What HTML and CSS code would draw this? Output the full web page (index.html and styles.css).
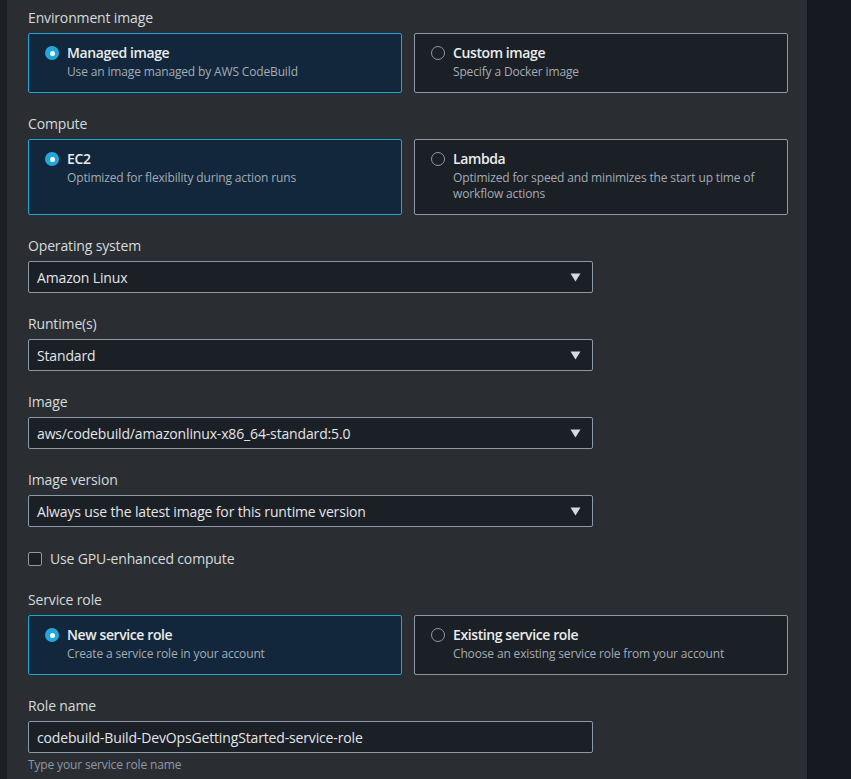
FILE: index.html
```html
<!DOCTYPE html>
<html lang="en">
<head>
<meta charset="utf-8">
<title>Environment</title>
<link rel="stylesheet" href="styles.css">
</head>
<body>
<div class="page">
  <div class="strip"></div>
  <main class="panel">
    <div class="field">
      <div class="label">Environment image</div>
      <div class="tiles">
        <div class="tile selected">
          <span class="radio on"></span>
          <div class="tile-text">
            <div class="tile-title">Managed image</div>
            <div class="tile-desc">Use an image managed by AWS CodeBuild</div>
          </div>
        </div>
        <div class="tile">
          <span class="radio"></span>
          <div class="tile-text">
            <div class="tile-title">Custom image</div>
            <div class="tile-desc">Specify a Docker image</div>
          </div>
        </div>
      </div>
    </div>

    <div class="field">
      <div class="label">Compute</div>
      <div class="tiles">
        <div class="tile selected">
          <span class="radio on"></span>
          <div class="tile-text">
            <div class="tile-title">EC2</div>
            <div class="tile-desc">Optimized for flexibility during action runs</div>
          </div>
        </div>
        <div class="tile">
          <span class="radio"></span>
          <div class="tile-text">
            <div class="tile-title">Lambda</div>
            <div class="tile-desc">Optimized for speed and minimizes the start up time of workflow actions</div>
          </div>
        </div>
      </div>
    </div>

    <div class="field">
      <div class="label">Operating system</div>
      <div class="select"><span>Amazon Linux</span><svg class="caret" width="11" height="9" viewBox="0 0 11 9"><path d="M0.5 0.5 L10.5 0.5 L5.5 8.5 Z" fill="#d5dbdb"/></svg></div>
    </div>

    <div class="field">
      <div class="label">Runtime(s)</div>
      <div class="select"><span>Standard</span><svg class="caret" width="11" height="9" viewBox="0 0 11 9"><path d="M0.5 0.5 L10.5 0.5 L5.5 8.5 Z" fill="#d5dbdb"/></svg></div>
    </div>

    <div class="field">
      <div class="label">Image</div>
      <div class="select"><span>aws/codebuild/amazonlinux-x86_64-standard:5.0</span><svg class="caret" width="11" height="9" viewBox="0 0 11 9"><path d="M0.5 0.5 L10.5 0.5 L5.5 8.5 Z" fill="#d5dbdb"/></svg></div>
    </div>

    <div class="field">
      <div class="label">Image version</div>
      <div class="select"><span>Always use the latest image for this runtime version</span><svg class="caret" width="11" height="9" viewBox="0 0 11 9"><path d="M0.5 0.5 L10.5 0.5 L5.5 8.5 Z" fill="#d5dbdb"/></svg></div>
    </div>

    <label class="check-row">
      <span class="checkbox"></span>
      <span class="check-label">Use GPU-enhanced compute</span>
    </label>

    <div class="field">
      <div class="label">Service role</div>
      <div class="tiles">
        <div class="tile selected">
          <span class="radio on"></span>
          <div class="tile-text">
            <div class="tile-title">New service role</div>
            <div class="tile-desc">Create a service role in your account</div>
          </div>
        </div>
        <div class="tile">
          <span class="radio"></span>
          <div class="tile-text">
            <div class="tile-title">Existing service role</div>
            <div class="tile-desc">Choose an existing service role from your account</div>
          </div>
        </div>
      </div>
    </div>

    <div class="field">
      <div class="label">Role name</div>
      <div class="input">codebuild-Build-DevOpsGettingStarted-service-role</div>
      <div class="hint">Type your service role name</div>
    </div>
  </main>
  <div class="side"></div>
</div>
</body>
</html>
```

FILE: styles.css
```css
* { box-sizing: border-box; }
html, body {
  margin: 0;
  padding: 0;
  height: 100%;
  background: #16191f;
  font-family: "Open Sans", "Noto Sans", sans-serif;
  color: #d5dbdb;
  overflow: hidden;
}
.page {
  display: flex;
  height: 779px;
}
.strip {
  width: 7px;
  flex: none;
  background: #1b1e22;
}
.panel {
  width: 801px;
  flex: none;
  background: #2a2e33;
  border-right: 1px solid #121519;
  padding: 8px 19px 0 21px;
  display: flex;
  flex-direction: column;
  gap: 21px;
}
.side {
  flex: 1;
  background: #16191f;
}
.field {
  display: flex;
  flex-direction: column;
}
.label {
  font-size: 14px;
  line-height: 20px;
  margin-bottom: 5px;
  color: #d5dbdb;
  letter-spacing: -0.15px;
}
.tiles {
  display: grid;
  grid-template-columns: 374px 374px;
  gap: 12px;
}
.tile {
  display: flex;
  align-items: flex-start;
  gap: 8px;
  padding: 9px 16px 12px 16px;
  background: #1b1f26;
  border: 1px solid #8d99a8;
  border-radius: 2px;
}
.tile.selected {
  background: #12273b;
  border-color: #1fa3d6;
}
.radio {
  flex: none;
  width: 14px;
  height: 14px;
  margin-top: 3px;
  border-radius: 50%;
  border: 1.5px solid #8d99a8;
}
.radio.on {
  border: none;
  background: #22a7dc;
  position: relative;
}
.radio.on::after {
  content: "";
  position: absolute;
  left: 4.5px;
  top: 4.5px;
  width: 5px;
  height: 5px;
  border-radius: 50%;
  background: #ffffff;
}
.tile-title {
  font-size: 14px;
  line-height: 20px;
  font-weight: 600;
  color: #eaeded;
  letter-spacing: -0.4px;
}
.tile-desc {
  margin-top: 1px;
  font-size: 12px;
  line-height: 16px;
  color: #a4acb5;
  letter-spacing: -0.15px;
}
.select, .input {
  width: 565px;
  height: 32px;
  display: flex;
  align-items: center;
  justify-content: space-between;
  padding: 0 11px 0 8px;
  background: #1b1f26;
  border: 1px solid #8d99a8;
  border-radius: 2px;
  font-size: 14px;
  color: #e3e6e8;
  letter-spacing: -0.15px;
}
.caret { flex: none; }
.check-row {
  display: flex;
  align-items: center;
  gap: 8px;
  height: 21px;
}
.checkbox {
  width: 14px;
  height: 14px;
  border: 1px solid #8d99a8;
  border-radius: 2px;
  background: #1b1f26;
}
.check-label {
  font-size: 14px;
  color: #d5dbdb;
  letter-spacing: -0.15px;
}
.hint {
  margin-top: 4px;
  font-size: 12px;
  line-height: 16px;
  color: #8d99a8;
  letter-spacing: -0.15px;
}
```
